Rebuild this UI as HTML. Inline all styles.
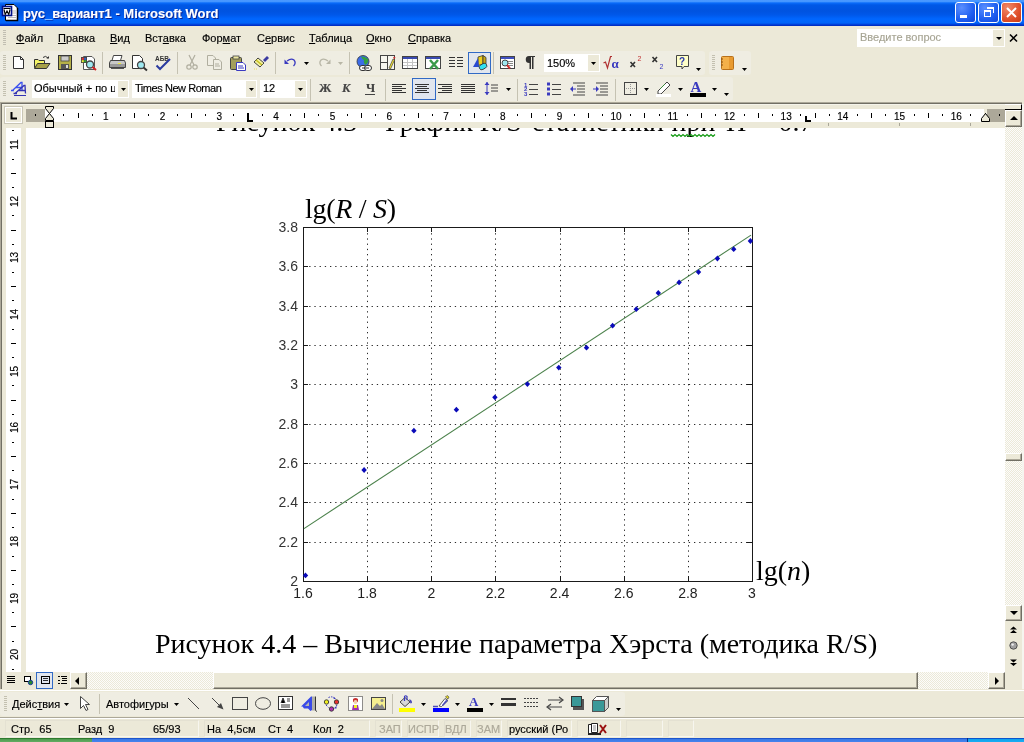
<!DOCTYPE html>
<html><head><meta charset="utf-8">
<style>
*{margin:0;padding:0;box-sizing:border-box}
html,body{width:1024px;height:742px;overflow:hidden}
body{position:relative;background:#ECE9D8;font-family:"Liberation Sans",sans-serif;font-size:11px;color:#000}
.a{position:absolute}
svg{position:absolute;overflow:visible}
#title{left:0;top:0;width:1024px;height:26px;background:linear-gradient(#4A98FF 0px,#4596FF 1.5px,#0A6CFA 3px,#0058E6 5px,#0053E0 11px,#0058EA 15px,#0066FF 19px,#0064F8 23px,#0034D0 25px,#002AB8 26px)}
#title .t{left:23px;top:6px;color:#fff;font-weight:bold;font-size:13px;white-space:nowrap;text-shadow:1px 1px 0 #0A1E8C}
.wb{top:2px;width:21px;height:21px;border:1px solid #fff;border-radius:3px;background:radial-gradient(circle at 30% 25%,#5A8FFF,#1F5FF0 60%,#1046D8)}
.menu{top:32px;white-space:nowrap;line-height:13px}
.menu u{text-decoration:underline;text-underline-offset:1px}
.tb{background:#EFEDE2;border-radius:3px}
.grip{width:3px;background:repeating-linear-gradient(#C1BEB1 0,#C1BEB1 1px,transparent 1px,transparent 2px)}
.sep{width:1px;background:#C5C2B2;border-right:1px solid #fff;width:2px}
.combo{background:#fff;border:1px solid #fff}
.dd{width:0;height:0;border-left:3px solid transparent;border-right:3px solid transparent;border-top:3px solid #000}
.doc{left:26px;top:128px;width:979px;height:544px;background:#fff;overflow:hidden}
.inner{position:absolute;left:-26px;top:-128px;width:1024px;height:742px}
.serif{font-family:"Liberation Serif",serif;font-size:28px;white-space:nowrap;line-height:32px}
.yl{position:absolute;left:258px;width:40px;text-align:right;font-size:14px;line-height:16px;color:#333}
.xl{position:absolute;top:585px;width:40px;text-align:center;font-size:14px;line-height:16px;color:#222}
.chk{background-color:#F5F3EB;background-image:repeating-conic-gradient(#ECE9D8 0 25%,#FCFCFB 0 50%);background-size:2px 2px}
.btn{background:#ECE9D8;border-top:1px solid #fff;border-left:1px solid #fff;border-right:1px solid #716F64;border-bottom:1px solid #716F64;box-shadow:inset -1px -1px 0 #ACA899}
.rn{position:absolute;top:109px;font-size:10px;line-height:12px;width:20px;text-align:center}
.st{top:722px;white-space:nowrap}
#wrap div{-webkit-text-stroke:0.15px currentColor}
#wrap .doc div{-webkit-text-stroke:0}
#wrap{position:absolute;left:0;top:0;width:1024px;height:742px;overflow:hidden;will-change:transform;background:#ECE9D8}
</style></head><body><div id="wrap">

<!-- Title bar -->
<div id="title" class="a">
  <svg class="a" style="left:0px;top:3px" width="20" height="19"><path d="M5.5 1.5H14L17.5 5V17.5H5.5Z" fill="#fff" stroke="#000"/><path d="M6 17.5H17.5V5" fill="none" stroke="#000" stroke-width="1.5"/><path d="M12 8H16M12 10H16M8 12.5H16M8 14.5H16" stroke="#bbb"/><rect x="2.5" y="3.5" width="9" height="9" fill="#fff" stroke="#00108C" stroke-width="1.6"/><path d="M3.5 5.5H10.5" stroke="#000"/><path d="M4 6.5L5.2 11.5L7 8L8.8 11.5L10 6.5" fill="none" stroke="#000" stroke-width="1.1"/></svg>
  <div class="a t">рус_вариант1 - Microsoft Word</div>
  <div class="a wb" style="left:955px"><div class="a" style="left:4px;top:12px;width:7px;height:3px;background:#fff"></div></div>
  <div class="a wb" style="left:978px"><div class="a" style="left:5px;top:7px;width:7px;height:7px;border:1px solid #fff;border-top-width:2px"></div><div class="a" style="left:8px;top:4px;width:7px;height:6px;border:1px solid #fff;border-top-width:2px;border-left:none;border-bottom:none"></div></div>
  <div class="a wb" style="left:1001px;background:radial-gradient(circle at 30% 25%,#F08A6A,#E0502A 60%,#C63A16)">
    <svg width="21" height="21" style="left:-1px;top:-1px"><path d="M6 6L15 15M15 6L6 15" stroke="#fff" stroke-width="2"/></svg>
  </div>
</div>

<!-- Menu bar -->
<div class="a grip" style="left:3px;top:30px;height:15px"></div>
<div class="a menu" style="left:16px"><u>Ф</u>айл</div>
<div class="a menu" style="left:58px"><u>П</u>равка</div>
<div class="a menu" style="left:110px"><u>В</u>ид</div>
<div class="a menu" style="left:145px">Вст<u>а</u>вка</div>
<div class="a menu" style="left:202px">Фор<u>м</u>ат</div>
<div class="a menu" style="left:257px">С<u>е</u>рвис</div>
<div class="a menu" style="left:309px"><u>Т</u>аблица</div>
<div class="a menu" style="left:366px"><u>О</u>кно</div>
<div class="a menu" style="left:408px"><u>С</u>правка</div>
<div class="a" style="left:857px;top:29px;width:148px;height:18px;background:#fff"></div>
<div class="a" style="left:993px;top:30px;width:11px;height:16px;background:#ECE9D8"></div>
<div class="a dd" style="left:996px;top:37px"></div>
<div class="a" style="left:860px;top:31px;color:#A7A594;white-space:nowrap">Введите вопрос</div>
<svg class="a" style="left:1009px;top:34px" width="10" height="8"><path d="M1 0.5L8 7.5M8 0.5L1 7.5" stroke="#000" stroke-width="1.6"/></svg>

<!-- Standard toolbar -->
<div class="a tb" style="left:0;top:51px;width:705px;height:24px"></div>
<div class="a tb" style="left:709px;top:51px;width:42px;height:24px"></div>
<!-- Formatting toolbar -->
<div class="a tb" style="left:0;top:77px;width:733px;height:24px"></div>
<svg class="a" style="left:3px;top:55px" width="4" height="16" viewBox="0 0 4 16"><rect x="0" y="0" width="3" height="1" fill="#C3C0B0"/><rect x="0" y="2" width="3" height="1" fill="#C3C0B0"/><rect x="0" y="4" width="3" height="1" fill="#C3C0B0"/><rect x="0" y="6" width="3" height="1" fill="#C3C0B0"/><rect x="0" y="8" width="3" height="1" fill="#C3C0B0"/><rect x="0" y="10" width="3" height="1" fill="#C3C0B0"/><rect x="0" y="12" width="3" height="1" fill="#C3C0B0"/><rect x="0" y="14" width="3" height="1" fill="#C3C0B0"/></svg>
<svg class="a" style="left:13px;top:55px" width="12" height="15" viewBox="0 0 12 15"><path d="M0.5 1.5H7.5L10.5 4.5V13.5H0.5Z" fill="#fff" stroke="#333"/><path d="M7.5 1.5V4.5H10.5" fill="none" stroke="#333"/></svg>
<svg class="a" style="left:34px;top:55px" width="17" height="15" viewBox="0 0 17 15"><path d="M0.5 4.5H4L5 5.5H10.5V12.5H0.5Z" fill="#F4F466" stroke="#333"/><path d="M0.5 13.5L3.5 8.5H16L12.5 13.5Z" fill="#A6A048" stroke="#333"/><path d="M9 2.5Q11.5 0 14 3" fill="none" stroke="#333"/><path d="M12.5 3.5H15V1Z" fill="#333"/></svg>
<svg class="a" style="left:58px;top:55px" width="15" height="16" viewBox="0 0 15 16"><rect x="0.5" y="0.5" width="13" height="14" fill="#B5B048" stroke="#333"/><rect x="3" y="1" width="8" height="5" fill="#ccc" stroke="#444" stroke-width="0.8"/><rect x="3" y="9" width="8" height="5" fill="#555"/><rect x="8" y="10" width="2" height="3" fill="#ddd"/></svg>
<svg class="a" style="left:81px;top:55px" width="16" height="16" viewBox="0 0 16 16"><path d="M2.5 1.5H11L13.5 4V14.5H2.5Z" fill="#fff" stroke="#555"/><rect x="0" y="2" width="6" height="6" fill="#444"/><rect x="0.8" y="2.8" width="2" height="2" fill="#e33"/><rect x="3.2" y="2.8" width="2" height="2" fill="#36c"/><rect x="0.8" y="5.2" width="2" height="2" fill="#ee3"/><rect x="3.2" y="5.2" width="2" height="2" fill="#3a3"/><circle cx="9" cy="9.5" r="3.5" fill="#9EE8F0" stroke="#444" stroke-width="1.3"/><path d="M11.5 12L15 15" stroke="#D02020" stroke-width="2"/></svg>
<div class="a" style="left:102px;top:52px;width:1px;height:22px;background:#C5C2B2"></div>
<svg class="a" style="left:109px;top:55px" width="17" height="15" viewBox="0 0 17 15"><path d="M4.5 0.5H13L11.5 5.5H3Z" fill="#fff" stroke="#444"/><path d="M1.5 5.5H15.5L16.5 8V12.5H0.5V8Z" fill="#C8C8C8" stroke="#444"/><rect x="1" y="9" width="15" height="3" fill="#9a9a9a"/><rect x="9" y="8" width="3" height="1" fill="#ee3"/><rect x="2" y="13" width="13" height="1" fill="#555"/></svg>
<svg class="a" style="left:132px;top:55px" width="17" height="16" viewBox="0 0 17 16"><path d="M0.5 0.5H7.5L10.5 3.5V13.5H0.5Z" fill="#fff" stroke="#333"/><circle cx="9" cy="10" r="3.5" fill="#9EE8F0" stroke="#444" stroke-width="1.3"/><path d="M11.5 12.5L15 15.5" stroke="#333" stroke-width="2"/></svg>
<svg class="a" style="left:155px;top:55px" width="16" height="16" viewBox="0 0 16 16"><text x="0" y="6" font-size="6.5" font-family="Liberation Sans" font-weight="bold" fill="#333">АБВ</text><path d="M1.5 10.5L5 14L15 4" fill="none" stroke="#2A3AA0" stroke-width="2"/></svg>
<div class="a" style="left:177px;top:52px;width:1px;height:22px;background:#C5C2B2"></div>
<svg class="a" style="left:186px;top:55px" width="12" height="15" viewBox="0 0 12 15"><path d="M3 0L8 10M9 0L4 10" stroke="#B0AE9F" stroke-width="1.2"/><circle cx="3" cy="12" r="2.2" fill="none" stroke="#B0AE9F" stroke-width="1.2"/><circle cx="9" cy="12" r="2.2" fill="none" stroke="#B0AE9F" stroke-width="1.2"/></svg>
<svg class="a" style="left:207px;top:55px" width="16" height="15" viewBox="0 0 16 15"><path d="M0.5 0.5H6L8.5 3V10.5H0.5Z" fill="#F0EEE4" stroke="#B0AE9F"/><path d="M6.5 4.5H12L14.5 7V14.5H6.5Z" fill="#F0EEE4" stroke="#B0AE9F"/><path d="M8 9H12M8 11H13" stroke="#B0AE9F"/></svg>
<svg class="a" style="left:230px;top:55px" width="17" height="16" viewBox="0 0 17 16"><rect x="0.5" y="2.5" width="11" height="12" rx="1" fill="#A39F5B" stroke="#444"/><rect x="3" y="1" width="6" height="3" fill="#EBE7A0" stroke="#444" stroke-width="0.8"/><path d="M6.5 7.5H13L15.5 10V15.5H6.5Z" fill="#fff" stroke="#3A3AC0"/><path d="M8 11H13M8 13H14" stroke="#3A3AC0"/></svg>
<svg class="a" style="left:253px;top:55px" width="17" height="16" viewBox="0 0 17 16"><path d="M1 7L7 12L11 8L5 3Z" fill="#F2F0A0" stroke="#444"/><path d="M3 5L9 10" stroke="#C8C020" stroke-width="1.5"/><path d="M10 5L14 1L16 3L12 7Z" fill="#3A3AA0"/><path d="M1 14H5" stroke="#EEE055" stroke-dasharray="1 1"/></svg>
<div class="a" style="left:275px;top:52px;width:1px;height:22px;background:#C5C2B2"></div>
<svg class="a" style="left:284px;top:55px" width="13" height="15" viewBox="0 0 13 15"><path d="M3 6Q7 3 10 5Q12.5 8 9.5 11" fill="none" stroke="#3A3ABF" stroke-width="1.3"/><path d="M0.5 4.5L5 9H0.5Z" fill="#3A3ABF"/></svg>
<svg class="a" style="left:304px;top:62px" width="5" height="3" viewBox="0 0 5 3"><path d="M0 0H5L2.5 3Z" fill="#000"/></svg>
<svg class="a" style="left:318px;top:55px" width="13" height="15" viewBox="0 0 13 15"><path d="M10 6Q6 3 3 5Q0.5 8 3.5 11" fill="none" stroke="#B8B6A6" stroke-width="1.3"/><path d="M12.5 4.5L8 9H12.5Z" fill="#B8B6A6"/></svg>
<svg class="a" style="left:338px;top:62px" width="5" height="3" viewBox="0 0 5 3"><path d="M0 0H5L2.5 3Z" fill="#B8B6A6"/></svg>
<div class="a" style="left:349px;top:52px;width:1px;height:22px;background:#C5C2B2"></div>
<svg class="a" style="left:356px;top:55px" width="17" height="17" viewBox="0 0 17 17"><circle cx="7" cy="6.5" r="6" fill="#3C6CE8" stroke="#333" stroke-width="0.8"/><path d="M5 1.5Q9 1 12 4Q13 8 9 10Q7 7 8 5Q6 4 5 1.5Z" fill="#34A040"/><rect x="3.5" y="10.5" width="7" height="5" rx="2.5" fill="#fff" stroke="#333"/><rect x="8.5" y="10.5" width="7" height="5" rx="2.5" fill="#fff" stroke="#333"/><path d="M6 13H13" stroke="#333"/></svg>
<svg class="a" style="left:380px;top:55px" width="16" height="16" viewBox="0 0 16 16"><rect x="0.5" y="0.5" width="14" height="14" fill="#F6F5EE" stroke="#444"/><path d="M7.5 0.5V14.5M0.5 7.5H7.5" stroke="#444"/><path d="M9 13L13 4L14.5 5L10.5 14Z" fill="#F2E030" stroke="#444" stroke-width="0.7"/><path d="M13 3L14 1.5L15.5 2.5L14.5 4" fill="#D03030"/></svg>
<svg class="a" style="left:402px;top:55px" width="17" height="15" viewBox="0 0 17 15"><rect x="0.5" y="1.5" width="15" height="12" fill="#fff" stroke="#444"/><rect x="1" y="2" width="14" height="2" fill="#3A4AB0"/><path d="M1 7.5H15M1 10.5H15M5.5 4V13M10.5 4V13" stroke="#C4C4C4"/></svg>
<svg class="a" style="left:425px;top:55px" width="17" height="16" viewBox="0 0 17 16"><rect x="0.5" y="1.5" width="15" height="12" fill="#fff" stroke="#444"/><rect x="1" y="2" width="14" height="2" fill="#3A4AB0"/><path d="M5 5L13 14M13 5L5 14" stroke="#3A9A4A" stroke-width="2.5"/></svg>
<svg class="a" style="left:449px;top:55px" width="14" height="14" viewBox="0 0 14 14"><path d="M0 2.5H6M8 2.5H14M0 5.5H6M8 5.5H14M0 8.5H6M8 8.5H14M0 11.5H6M8 11.5H14" stroke="#333" stroke-width="1"/></svg>
<div class="a" style="left:468px;top:52px;width:23px;height:22px;background:#E1E6EE;border:1px solid #316AC5"></div>
<svg class="a" style="left:472px;top:55px" width="17" height="16" viewBox="0 0 17 16"><path d="M6 2L11 0.5V9L6 10.5Z" fill="#EED020" stroke="#333" stroke-width="0.8"/><path d="M11 0.5L14 2.5V11L11 9Z" fill="#C8A818" stroke="#333" stroke-width="0.8"/><path d="M1 12L6 3L7 12Z" fill="#2A4AD0"/><rect x="7" y="9" width="8" height="5" rx="2.5" fill="#30E0F0" stroke="#333" stroke-width="0.8" transform="rotate(-30 11 11.5)"/></svg>
<div class="a" style="left:493px;top:52px;width:1px;height:22px;background:#C5C2B2"></div>
<svg class="a" style="left:500px;top:55px" width="16" height="16" viewBox="0 0 16 16"><rect x="0.5" y="1.5" width="14" height="12" fill="#fff" stroke="#444"/><rect x="1" y="2" width="13" height="2" fill="#4050C0"/><path d="M8 6.5H13M8 8.5H13M8 10.5H13" stroke="#888"/><circle cx="5" cy="8" r="3" fill="#9EE8F0" stroke="#444"/><path d="M7 10L10 13.5" stroke="#D03030" stroke-width="2"/></svg>
<svg class="a" style="left:524px;top:55px" width="12" height="15" viewBox="0 0 12 15"><path d="M5 1H11V2H9.5V14H8V2H7V14H5.5V8A3.5 3.5 0 0 1 5 1Z" fill="#333"/></svg>
<div class="a" style="left:544px;top:54px;width:56px;height:18px;background:#fff"></div>
<div class="a" style="left:588px;top:55px;width:11px;height:16px;background:#ECE9D8"></div>
<svg class="a" style="left:591px;top:62px" width="5" height="3" viewBox="0 0 5 3"><path d="M0 0H5L2.5 3Z" fill="#000"/></svg>
<div class="a" style="left:547px;top:57px;white-space:nowrap;font-size:11px;line-height:12px">150%</div>
<svg class="a" style="left:603px;top:55px" width="18" height="15" viewBox="0 0 18 15"><path d="M0.5 8L2.5 7L4.5 13L7.5 1.5H9" fill="none" stroke="#B03030" stroke-width="1.2"/><text x="8.5" y="12.5" font-size="13" font-family="Liberation Serif" fill="#3A3ABF" font-weight="bold">α</text></svg>
<svg class="a" style="left:630px;top:55px" width="13" height="15" viewBox="0 0 13 15"><path d="M0.5 7L5 12M5 7L0.5 12" stroke="#333" stroke-width="1.6"/><text x="7.5" y="5.5" font-size="7" font-family="Liberation Sans" fill="#C03030">2</text></svg>
<svg class="a" style="left:652px;top:55px" width="13" height="15" viewBox="0 0 13 15"><path d="M0.5 2L5 7M5 2L0.5 7" stroke="#333" stroke-width="1.6"/><text x="7.5" y="13.5" font-size="7" font-family="Liberation Sans" fill="#3A3AC0">2</text></svg>
<svg class="a" style="left:675px;top:55px" width="15" height="16" viewBox="0 0 15 16"><path d="M1.5 0.5H13.5V11.5H9L7 14V11.5H1.5Z" fill="#FFFFC8" stroke="#444"/><text x="4" y="10" font-size="10" font-weight="bold" font-family="Liberation Sans" fill="#2A3AB0">?</text></svg>
<svg class="a" style="left:696px;top:68px" width="5" height="3" viewBox="0 0 5 3"><path d="M0 0H5L2.5 3Z" fill="#000"/></svg>
<svg class="a" style="left:712px;top:55px" width="4" height="16" viewBox="0 0 4 16"><rect x="0" y="0" width="3" height="1" fill="#C3C0B0"/><rect x="0" y="2" width="3" height="1" fill="#C3C0B0"/><rect x="0" y="4" width="3" height="1" fill="#C3C0B0"/><rect x="0" y="6" width="3" height="1" fill="#C3C0B0"/><rect x="0" y="8" width="3" height="1" fill="#C3C0B0"/><rect x="0" y="10" width="3" height="1" fill="#C3C0B0"/><rect x="0" y="12" width="3" height="1" fill="#C3C0B0"/><rect x="0" y="14" width="3" height="1" fill="#C3C0B0"/></svg>
<svg class="a" style="left:720px;top:55px" width="15" height="16" viewBox="0 0 15 16"><rect x="1.5" y="1.5" width="12" height="13" rx="1" fill="#F3B04A" stroke="#B8701A"/><path d="M1 4H3M1 7H3M1 10H3" stroke="#8A5010"/><rect x="9" y="2" width="4" height="12" fill="#E89A30"/></svg>
<svg class="a" style="left:742px;top:68px" width="5" height="3" viewBox="0 0 5 3"><path d="M0 0H5L2.5 3Z" fill="#000"/></svg>
<svg class="a" style="left:3px;top:81px" width="4" height="16" viewBox="0 0 4 16"><rect x="0" y="0" width="3" height="1" fill="#C3C0B0"/><rect x="0" y="2" width="3" height="1" fill="#C3C0B0"/><rect x="0" y="4" width="3" height="1" fill="#C3C0B0"/><rect x="0" y="6" width="3" height="1" fill="#C3C0B0"/><rect x="0" y="8" width="3" height="1" fill="#C3C0B0"/><rect x="0" y="10" width="3" height="1" fill="#C3C0B0"/><rect x="0" y="12" width="3" height="1" fill="#C3C0B0"/><rect x="0" y="14" width="3" height="1" fill="#C3C0B0"/></svg>
<svg class="a" style="left:10px;top:81px" width="18" height="17" viewBox="0 0 18 17"><path d="M1 9.5H4M2.5 9.5L11 1.5H12L12 9.5M6 6.5H11.5" fill="none" stroke="#3A50F0" stroke-width="1.3"/><path d="M3.5 12.5H7M5 12.5L14 4.5H15L15.5 12.5M9 9.5H15" fill="none" stroke="#3434B4" stroke-width="1.3"/><rect x="4" y="14" width="12" height="1" fill="#3434B4"/></svg>
<div class="a" style="left:32px;top:80px;width:97px;height:18px;background:#fff"></div>
<div class="a" style="left:118px;top:81px;width:10px;height:16px;background:#ECE9D8"></div>
<svg class="a" style="left:121px;top:88px" width="5" height="3" viewBox="0 0 5 3"><path d="M0 0H5L2.5 3Z" fill="#000"/></svg>
<div class="a" style="left:34px;top:82px;width:81px;overflow:hidden;white-space:nowrap;font-size:11px;line-height:13px">Обычный + по ц</div>
<div class="a" style="left:132px;top:80px;width:125px;height:18px;background:#fff"></div>
<div class="a" style="left:246px;top:81px;width:10px;height:16px;background:#ECE9D8"></div>
<svg class="a" style="left:249px;top:88px" width="5" height="3" viewBox="0 0 5 3"><path d="M0 0H5L2.5 3Z" fill="#000"/></svg>
<div class="a" style="left:135px;top:82px;white-space:nowrap;font-size:11px;line-height:13px;letter-spacing:-0.45px">Times New Roman</div>
<div class="a" style="left:260px;top:80px;width:47px;height:18px;background:#fff"></div>
<div class="a" style="left:295px;top:81px;width:11px;height:16px;background:#ECE9D8"></div>
<svg class="a" style="left:298px;top:88px" width="5" height="3" viewBox="0 0 5 3"><path d="M0 0H5L2.5 3Z" fill="#000"/></svg>
<div class="a" style="left:263px;top:82px;white-space:nowrap;font-size:11px;line-height:13px">12</div>
<div class="a" style="left:310px;top:79px;width:1px;height:22px;background:#C5C2B2"></div>
<div class="a" style="left:319px;top:81px;white-space:nowrap;font-family:Liberation Serif;font-weight:bold;font-size:12.5px;color:#444;line-height:14px">Ж</div>
<div class="a" style="left:342px;top:81px;white-space:nowrap;font-family:Liberation Serif;font-weight:bold;font-style:italic;font-size:12.5px;color:#444;line-height:14px">К</div>
<div class="a" style="left:366px;top:81px;white-space:nowrap;font-family:Liberation Serif;font-weight:bold;font-size:12.5px;color:#444;line-height:14px">Ч</div>
<div class="a" style="left:365px;top:94px;width:10px;height:1px;background:#444"></div>
<div class="a" style="left:385px;top:79px;width:1px;height:22px;background:#C5C2B2"></div>
<svg class="a" style="left:392px;top:81px" width="16" height="16" viewBox="0 0 16 16"><rect x="0" y="3" width="14" height="1" fill="#333"/><rect x="0" y="5" width="10" height="1" fill="#333"/><rect x="0" y="7" width="14" height="1" fill="#333"/><rect x="0" y="9" width="10" height="1" fill="#333"/><rect x="0" y="11" width="14" height="1" fill="#333"/></svg>
<div class="a" style="left:412px;top:78px;width:24px;height:22px;background:#E1E6EE;border:1px solid #316AC5"></div>
<svg class="a" style="left:415px;top:81px" width="16" height="16" viewBox="0 0 16 16"><rect x="0" y="3" width="14" height="1" fill="#333"/><rect x="2" y="5" width="10" height="1" fill="#333"/><rect x="0" y="7" width="14" height="1" fill="#333"/><rect x="2" y="9" width="10" height="1" fill="#333"/><rect x="0" y="11" width="14" height="1" fill="#333"/></svg>
<svg class="a" style="left:438px;top:81px" width="16" height="16" viewBox="0 0 16 16"><rect x="0" y="3" width="14" height="1" fill="#333"/><rect x="4" y="5" width="10" height="1" fill="#333"/><rect x="0" y="7" width="14" height="1" fill="#333"/><rect x="4" y="9" width="10" height="1" fill="#333"/><rect x="0" y="11" width="14" height="1" fill="#333"/></svg>
<svg class="a" style="left:461px;top:81px" width="16" height="16" viewBox="0 0 16 16"><rect x="0" y="3" width="14" height="1" fill="#333"/><rect x="0" y="5" width="14" height="1" fill="#333"/><rect x="0" y="7" width="14" height="1" fill="#333"/><rect x="0" y="9" width="14" height="1" fill="#333"/><rect x="0" y="11" width="14" height="1" fill="#333"/></svg>
<svg class="a" style="left:484px;top:81px" width="16" height="16" viewBox="0 0 16 16"><path d="M3 1V14" stroke="#3A3ABF"/><path d="M0.5 4L3 1L5.5 4ZM0.5 11L3 14L5.5 11Z" fill="#3A3ABF"/><path d="M7 4H14M7 7H14M7 10H14" stroke="#444"/></svg>
<svg class="a" style="left:506px;top:88px" width="5" height="3" viewBox="0 0 5 3"><path d="M0 0H5L2.5 3Z" fill="#000"/></svg>
<div class="a" style="left:517px;top:79px;width:1px;height:22px;background:#C5C2B2"></div>
<svg class="a" style="left:524px;top:81px" width="16" height="16" viewBox="0 0 16 16"><text x="0" y="5.5" font-size="6" font-weight="bold" font-family="Liberation Sans" fill="#3A3ABF">1</text><text x="0" y="10" font-size="6" font-weight="bold" font-family="Liberation Sans" fill="#3A3ABF">2</text><text x="0" y="14.5" font-size="6" font-weight="bold" font-family="Liberation Sans" fill="#3A3ABF">3</text><path d="M5 3.5H14M5 8.5H14M5 13.5H14" stroke="#444"/></svg>
<svg class="a" style="left:547px;top:81px" width="16" height="16" viewBox="0 0 16 16"><rect x="0" y="1.5" width="3" height="3" fill="#3A3ABF"/><rect x="0" y="6.5" width="3" height="3" fill="#3A3ABF"/><rect x="0" y="11.5" width="3" height="3" fill="#3A3ABF"/><path d="M5 3.5H14M5 8.5H14M5 13.5H14" stroke="#444"/></svg>
<svg class="a" style="left:570px;top:81px" width="17" height="16" viewBox="0 0 17 16"><path d="M3 2H15M7 5H15M7 8H15M7 11H15M3 14H15" stroke="#444"/><path d="M0 8L3 5V11Z" fill="#3A3ABF"/><path d="M3 8H6" stroke="#3A3ABF"/></svg>
<svg class="a" style="left:593px;top:81px" width="17" height="16" viewBox="0 0 17 16"><path d="M3 2H15M7 5H15M7 8H15M7 11H15M3 14H15" stroke="#444"/><path d="M6 8L3 5V11Z" fill="#3A3ABF"/><path d="M0 8H3" stroke="#3A3ABF"/></svg>
<div class="a" style="left:615px;top:79px;width:1px;height:22px;background:#C5C2B2"></div>
<svg class="a" style="left:624px;top:81px" width="14" height="16" viewBox="0 0 14 16"><rect x="0.5" y="1.5" width="12" height="12" fill="none" stroke="#444"/><path d="M6.5 3V12M2 7.5H11" stroke="#999" stroke-dasharray="1 1"/></svg>
<svg class="a" style="left:644px;top:88px" width="5" height="3" viewBox="0 0 5 3"><path d="M0 0H5L2.5 3Z" fill="#000"/></svg>
<svg class="a" style="left:656px;top:81px" width="17" height="16" viewBox="0 0 17 16"><path d="M2 10L11 1L14 4L5 13H2Z" fill="#fff" stroke="#444"/><path d="M4 8L9 3" stroke="#3A8A3A"/><rect x="0" y="13" width="15" height="3" fill="#fff"/></svg>
<svg class="a" style="left:678px;top:88px" width="5" height="3" viewBox="0 0 5 3"><path d="M0 0H5L2.5 3Z" fill="#000"/></svg>
<svg class="a" style="left:690px;top:81px" width="17" height="17" viewBox="0 0 17 17"><text x="0.5" y="11" font-size="15" font-weight="bold" font-family="Liberation Serif" fill="#3A3ABF">A</text><rect x="0" y="12" width="16" height="4" fill="#000"/></svg>
<svg class="a" style="left:712px;top:88px" width="5" height="3" viewBox="0 0 5 3"><path d="M0 0H5L2.5 3Z" fill="#000"/></svg>
<svg class="a" style="left:724px;top:93px" width="5" height="3" viewBox="0 0 5 3"><path d="M0 0H5L2.5 3Z" fill="#000"/></svg>

<!-- Ruler frame -->
<div class="a" style="left:0;top:102px;width:1022px;height:1px;background:#ACA899"></div><div class="a" style="left:0;top:103px;width:1022px;height:1px;background:#716F64"></div><div class="a" style="left:2px;top:104px;width:1020px;height:1px;background:#F5F4EA"></div>

<!-- tab selector -->
<div class="a" style="left:5px;top:107px;width:17px;height:16px;background:#ECE9D8;border:1px solid #fff;outline:1px solid #C9C6B6"></div>
<svg class="a" style="left:0;top:0" width="30" height="130"><path d="M11.5 112V118.5H17" stroke="#000" stroke-width="2" fill="none"/></svg>
<!-- horizontal ruler -->
<div class="a" style="left:26px;top:109px;width:19px;height:13px;background:#ACA899"></div>
<div class="a" style="left:45px;top:109px;width:939px;height:13px;background:#fff"></div>
<div class="a" style="left:987px;top:109px;width:18px;height:13px;background:#ACA899"></div>
<div class="a" style="left:95.89px;top:109.5px;width:20px;text-align:center;font-size:10px;line-height:13px">1</div>
<div class="a" style="left:152.58px;top:109.5px;width:20px;text-align:center;font-size:10px;line-height:13px">2</div>
<div class="a" style="left:209.27px;top:109.5px;width:20px;text-align:center;font-size:10px;line-height:13px">3</div>
<div class="a" style="left:265.96px;top:109.5px;width:20px;text-align:center;font-size:10px;line-height:13px">4</div>
<div class="a" style="left:322.65px;top:109.5px;width:20px;text-align:center;font-size:10px;line-height:13px">5</div>
<div class="a" style="left:379.34px;top:109.5px;width:20px;text-align:center;font-size:10px;line-height:13px">6</div>
<div class="a" style="left:436.03px;top:109.5px;width:20px;text-align:center;font-size:10px;line-height:13px">7</div>
<div class="a" style="left:492.72px;top:109.5px;width:20px;text-align:center;font-size:10px;line-height:13px">8</div>
<div class="a" style="left:549.41px;top:109.5px;width:20px;text-align:center;font-size:10px;line-height:13px">9</div>
<div class="a" style="left:606.10px;top:109.5px;width:20px;text-align:center;font-size:10px;line-height:13px">10</div>
<div class="a" style="left:662.79px;top:109.5px;width:20px;text-align:center;font-size:10px;line-height:13px">11</div>
<div class="a" style="left:719.48px;top:109.5px;width:20px;text-align:center;font-size:10px;line-height:13px">12</div>
<div class="a" style="left:776.17px;top:109.5px;width:20px;text-align:center;font-size:10px;line-height:13px">13</div>
<div class="a" style="left:832.86px;top:109.5px;width:20px;text-align:center;font-size:10px;line-height:13px">14</div>
<div class="a" style="left:889.55px;top:109.5px;width:20px;text-align:center;font-size:10px;line-height:13px">15</div>
<div class="a" style="left:946.24px;top:109.5px;width:20px;text-align:center;font-size:10px;line-height:13px">16</div>
<svg class="a" style="left:0px;top:0px" width="1024" height="130" viewBox="0 0 1024 130"><rect x="35" y="114" width="1" height="2" fill="#000"/><rect x="63" y="114" width="1" height="2" fill="#000"/><rect x="78" y="113" width="1" height="5" fill="#000"/><rect x="92" y="114" width="1" height="2" fill="#000"/><rect x="120" y="114" width="1" height="2" fill="#000"/><rect x="134" y="113" width="1" height="5" fill="#000"/><rect x="148" y="114" width="1" height="2" fill="#000"/><rect x="177" y="114" width="1" height="2" fill="#000"/><rect x="191" y="113" width="1" height="5" fill="#000"/><rect x="205" y="114" width="1" height="2" fill="#000"/><rect x="233" y="114" width="1" height="2" fill="#000"/><rect x="248" y="113" width="1" height="5" fill="#000"/><rect x="262" y="114" width="1" height="2" fill="#000"/><rect x="290" y="114" width="1" height="2" fill="#000"/><rect x="304" y="113" width="1" height="5" fill="#000"/><rect x="318" y="114" width="1" height="2" fill="#000"/><rect x="347" y="114" width="1" height="2" fill="#000"/><rect x="361" y="113" width="1" height="5" fill="#000"/><rect x="375" y="114" width="1" height="2" fill="#000"/><rect x="404" y="114" width="1" height="2" fill="#000"/><rect x="418" y="113" width="1" height="5" fill="#000"/><rect x="432" y="114" width="1" height="2" fill="#000"/><rect x="460" y="114" width="1" height="2" fill="#000"/><rect x="474" y="113" width="1" height="5" fill="#000"/><rect x="489" y="114" width="1" height="2" fill="#000"/><rect x="517" y="114" width="1" height="2" fill="#000"/><rect x="531" y="113" width="1" height="5" fill="#000"/><rect x="545" y="114" width="1" height="2" fill="#000"/><rect x="574" y="114" width="1" height="2" fill="#000"/><rect x="588" y="113" width="1" height="5" fill="#000"/><rect x="602" y="114" width="1" height="2" fill="#000"/><rect x="630" y="114" width="1" height="2" fill="#000"/><rect x="644" y="113" width="1" height="5" fill="#000"/><rect x="659" y="114" width="1" height="2" fill="#000"/><rect x="687" y="114" width="1" height="2" fill="#000"/><rect x="701" y="113" width="1" height="5" fill="#000"/><rect x="715" y="114" width="1" height="2" fill="#000"/><rect x="744" y="114" width="1" height="2" fill="#000"/><rect x="758" y="113" width="1" height="5" fill="#000"/><rect x="772" y="114" width="1" height="2" fill="#000"/><rect x="800" y="114" width="1" height="2" fill="#000"/><rect x="815" y="113" width="1" height="5" fill="#000"/><rect x="829" y="114" width="1" height="2" fill="#000"/><rect x="857" y="114" width="1" height="2" fill="#000"/><rect x="871" y="113" width="1" height="5" fill="#000"/><rect x="885" y="114" width="1" height="2" fill="#000"/><rect x="914" y="114" width="1" height="2" fill="#000"/><rect x="928" y="113" width="1" height="5" fill="#000"/><rect x="942" y="114" width="1" height="2" fill="#000"/><rect x="970" y="114" width="1" height="2" fill="#000"/><rect x="985" y="113" width="1" height="5" fill="#000"/><rect x="999" y="114" width="1" height="2" fill="#000"/></svg>
<svg class="a" style="left:44px;top:105px" width="11" height="24" viewBox="0 0 11 24"><path d="M1.5 1.5H9.5V3.5L5.5 8.5L9.5 13.5V15.5H1.5V13.5L5.5 8.5L1.5 3.5Z" fill="#ECE9D8" stroke="#000"/><rect x="1.5" y="16.5" width="8" height="6" fill="#ECE9D8" stroke="#000"/></svg>
<svg class="a" style="left:980px;top:112px" width="11" height="11" viewBox="0 0 11 11"><path d="M1.5 9.5V6.5L5.5 1.5L9.5 6.5V9.5Z" fill="#ECE9D8" stroke="#000"/></svg>
<svg class="a" style="left:0px;top:0px" width="1024" height="130" viewBox="0 0 1024 130"><rect x="247" y="113" width="1" height="9" fill="#000"/><rect x="248" y="116" width="1" height="6" fill="#000"/><rect x="247" y="120" width="6" height="2" fill="#000"/><rect x="805" y="116" width="2" height="6" fill="#000"/><rect x="805" y="120" width="6" height="2" fill="#000"/><rect x="828" y="123" width="1" height="3" fill="#A8A698"/><rect x="899" y="123" width="1" height="3" fill="#A8A698"/><rect x="970" y="123" width="1" height="3" fill="#A8A698"/></svg>

<!-- Document -->
<div class="a doc"><div class="inner">
  <div class="a serif" style="left:216px;top:106px">Рисунок 4.3 – График R/S <span style="margin-left:3px">статистики</span> <span style="margin-left:0.5px">при</span> <span style="margin-left:3.5px">H</span> = <span style="margin-left:2.5px">0.7</span></div>
  <svg class="a" style="left:671px;top:133px" width="45" height="5"><path d="M0 1.5L2 3.5L4 1.5L6 3.5L8 1.5L10 3.5L12 1.5L14 3.5L16 1.5L18 3.5L20 1.5L22 3.5L24 1.5L26 3.5L28 1.5L30 3.5L32 1.5L34 3.5L36 1.5L38 3.5L40 1.5L42 3.5L44 1.5" fill="none" stroke="#129A12" stroke-width="1.2"/></svg>
  <svg class="a" style="left:0;top:0" width="1024" height="742">
<line x1="367.5" y1="228" x2="367.5" y2="581" stroke="#2a2a2a" stroke-width="1" stroke-dasharray="1.3 3.9"/>
<line x1="431.5" y1="228" x2="431.5" y2="581" stroke="#2a2a2a" stroke-width="1" stroke-dasharray="1.3 3.9"/>
<line x1="495.5" y1="228" x2="495.5" y2="581" stroke="#2a2a2a" stroke-width="1" stroke-dasharray="1.3 3.9"/>
<line x1="560.5" y1="228" x2="560.5" y2="581" stroke="#2a2a2a" stroke-width="1" stroke-dasharray="1.3 3.9"/>
<line x1="624.5" y1="228" x2="624.5" y2="581" stroke="#2a2a2a" stroke-width="1" stroke-dasharray="1.3 3.9"/>
<line x1="688.5" y1="228" x2="688.5" y2="581" stroke="#2a2a2a" stroke-width="1" stroke-dasharray="1.3 3.9"/>
<line x1="304" y1="542.5" x2="752" y2="542.5" stroke="#2a2a2a" stroke-width="1" stroke-dasharray="1.3 3.9"/>
<line x1="304" y1="502.5" x2="752" y2="502.5" stroke="#2a2a2a" stroke-width="1" stroke-dasharray="1.3 3.9"/>
<line x1="304" y1="463.5" x2="752" y2="463.5" stroke="#2a2a2a" stroke-width="1" stroke-dasharray="1.3 3.9"/>
<line x1="304" y1="424.5" x2="752" y2="424.5" stroke="#2a2a2a" stroke-width="1" stroke-dasharray="1.3 3.9"/>
<line x1="304" y1="384.5" x2="752" y2="384.5" stroke="#2a2a2a" stroke-width="1" stroke-dasharray="1.3 3.9"/>
<line x1="304" y1="345.5" x2="752" y2="345.5" stroke="#2a2a2a" stroke-width="1" stroke-dasharray="1.3 3.9"/>
<line x1="304" y1="306.5" x2="752" y2="306.5" stroke="#2a2a2a" stroke-width="1" stroke-dasharray="1.3 3.9"/>
<line x1="304" y1="266.5" x2="752" y2="266.5" stroke="#2a2a2a" stroke-width="1" stroke-dasharray="1.3 3.9"/>
<line x1="367.5" y1="227" x2="367.5" y2="232" stroke="#1a1a1a"/>
<line x1="367.5" y1="581" x2="367.5" y2="576" stroke="#1a1a1a"/>
<line x1="431.5" y1="227" x2="431.5" y2="232" stroke="#1a1a1a"/>
<line x1="431.5" y1="581" x2="431.5" y2="576" stroke="#1a1a1a"/>
<line x1="495.5" y1="227" x2="495.5" y2="232" stroke="#1a1a1a"/>
<line x1="495.5" y1="581" x2="495.5" y2="576" stroke="#1a1a1a"/>
<line x1="560.5" y1="227" x2="560.5" y2="232" stroke="#1a1a1a"/>
<line x1="560.5" y1="581" x2="560.5" y2="576" stroke="#1a1a1a"/>
<line x1="624.5" y1="227" x2="624.5" y2="232" stroke="#1a1a1a"/>
<line x1="624.5" y1="581" x2="624.5" y2="576" stroke="#1a1a1a"/>
<line x1="688.5" y1="227" x2="688.5" y2="232" stroke="#1a1a1a"/>
<line x1="688.5" y1="581" x2="688.5" y2="576" stroke="#1a1a1a"/>
<line x1="303" y1="542.5" x2="308" y2="542.5" stroke="#1a1a1a"/>
<line x1="752" y1="542.5" x2="747" y2="542.5" stroke="#1a1a1a"/>
<line x1="303" y1="502.5" x2="308" y2="502.5" stroke="#1a1a1a"/>
<line x1="752" y1="502.5" x2="747" y2="502.5" stroke="#1a1a1a"/>
<line x1="303" y1="463.5" x2="308" y2="463.5" stroke="#1a1a1a"/>
<line x1="752" y1="463.5" x2="747" y2="463.5" stroke="#1a1a1a"/>
<line x1="303" y1="424.5" x2="308" y2="424.5" stroke="#1a1a1a"/>
<line x1="752" y1="424.5" x2="747" y2="424.5" stroke="#1a1a1a"/>
<line x1="303" y1="384.5" x2="308" y2="384.5" stroke="#1a1a1a"/>
<line x1="752" y1="384.5" x2="747" y2="384.5" stroke="#1a1a1a"/>
<line x1="303" y1="345.5" x2="308" y2="345.5" stroke="#1a1a1a"/>
<line x1="752" y1="345.5" x2="747" y2="345.5" stroke="#1a1a1a"/>
<line x1="303" y1="306.5" x2="308" y2="306.5" stroke="#1a1a1a"/>
<line x1="752" y1="306.5" x2="747" y2="306.5" stroke="#1a1a1a"/>
<line x1="303" y1="266.5" x2="308" y2="266.5" stroke="#1a1a1a"/>
<line x1="752" y1="266.5" x2="747" y2="266.5" stroke="#1a1a1a"/>
<rect x="303.5" y="227.5" width="449" height="354" fill="none" stroke="#1a1a1a" stroke-width="1"/>
<line x1="304" y1="528.6" x2="751" y2="235.1" stroke="#4a804a" stroke-width="1.1"/>
<path d="M302.8 575.4L305.5 572.5L308.2 575.4L305.5 578.3Z" fill="#0a0ab8"/>
<path d="M361.40000000000003 470.0L364.1 467.1L366.8 470.0L364.1 472.9Z" fill="#0a0ab8"/>
<path d="M411.2 430.7L413.9 427.8L416.59999999999997 430.7L413.9 433.59999999999997Z" fill="#0a0ab8"/>
<path d="M453.7 409.7L456.4 406.8L459.09999999999997 409.7L456.4 412.59999999999997Z" fill="#0a0ab8"/>
<path d="M492.2 397.3L494.9 394.40000000000003L497.59999999999997 397.3L494.9 400.2Z" fill="#0a0ab8"/>
<path d="M524.6999999999999 384.1L527.4 381.20000000000005L530.1 384.1L527.4 387.0Z" fill="#0a0ab8"/>
<path d="M556.0999999999999 367.6L558.8 364.70000000000005L561.5 367.6L558.8 370.5Z" fill="#0a0ab8"/>
<path d="M583.8 347.7L586.5 344.8L589.2 347.7L586.5 350.59999999999997Z" fill="#0a0ab8"/>
<path d="M609.9 325.7L612.6 322.8L615.3000000000001 325.7L612.6 328.59999999999997Z" fill="#0a0ab8"/>
<path d="M633.5999999999999 309.2L636.3 306.3L639.0 309.2L636.3 312.09999999999997Z" fill="#0a0ab8"/>
<path d="M655.5999999999999 292.9L658.3 290.0L661.0 292.9L658.3 295.79999999999995Z" fill="#0a0ab8"/>
<path d="M676.4 282.4L679.1 279.5L681.8000000000001 282.4L679.1 285.29999999999995Z" fill="#0a0ab8"/>
<path d="M695.8 272.1L698.5 269.20000000000005L701.2 272.1L698.5 275.0Z" fill="#0a0ab8"/>
<path d="M714.6999999999999 258.5L717.4 255.6L720.1 258.5L717.4 261.4Z" fill="#0a0ab8"/>
<path d="M731.0 249.2L733.7 246.29999999999998L736.4000000000001 249.2L733.7 252.1Z" fill="#0a0ab8"/>
<path d="M747.6999999999999 241.0L750.4 238.1L753.1 241.0L750.4 243.9Z" fill="#0a0ab8"/>
  </svg>
<div class="yl" style="top:573.0px">2</div>
<div class="yl" style="top:533.7px">2.2</div>
<div class="yl" style="top:494.3px">2.4</div>
<div class="yl" style="top:455.0px">2.6</div>
<div class="yl" style="top:415.7px">2.8</div>
<div class="yl" style="top:376.3px">3</div>
<div class="yl" style="top:337.0px">3.2</div>
<div class="yl" style="top:297.7px">3.4</div>
<div class="yl" style="top:258.3px">3.6</div>
<div class="yl" style="top:219.0px">3.8</div>
<div class="xl" style="left:283.0px">1.6</div>
<div class="xl" style="left:347.1px">1.8</div>
<div class="xl" style="left:411.3px">2</div>
<div class="xl" style="left:475.4px">2.2</div>
<div class="xl" style="left:539.6px">2.4</div>
<div class="xl" style="left:603.7px">2.6</div>
<div class="xl" style="left:667.9px">2.8</div>
<div class="xl" style="left:732.0px">3</div>
  <div class="a serif" style="left:305px;top:193px;letter-spacing:-0.3px">lg(<i>R</i> / <i>S</i>)</div>
  <div class="a serif" style="left:756px;top:555px">lg(<i>n</i>)</div>
  <div class="a serif" style="left:155px;top:628px">Рисунок 4.4 – Вычисление параметра Хэрста (методика R/S)</div>
</div></div>

<!-- vertical ruler -->
<div class="a" style="left:6px;top:128px;width:15px;height:544px;background:#fff"></div>
<div class="a" style="left:4px;top:138.00px;width:21px;height:13px;text-align:center;font-size:10px;line-height:13px;transform:rotate(-90deg)">11</div>
<div class="a" style="left:4px;top:194.69px;width:21px;height:13px;text-align:center;font-size:10px;line-height:13px;transform:rotate(-90deg)">12</div>
<div class="a" style="left:4px;top:251.38px;width:21px;height:13px;text-align:center;font-size:10px;line-height:13px;transform:rotate(-90deg)">13</div>
<div class="a" style="left:4px;top:308.07px;width:21px;height:13px;text-align:center;font-size:10px;line-height:13px;transform:rotate(-90deg)">14</div>
<div class="a" style="left:4px;top:364.76px;width:21px;height:13px;text-align:center;font-size:10px;line-height:13px;transform:rotate(-90deg)">15</div>
<div class="a" style="left:4px;top:421.45px;width:21px;height:13px;text-align:center;font-size:10px;line-height:13px;transform:rotate(-90deg)">16</div>
<div class="a" style="left:4px;top:478.14px;width:21px;height:13px;text-align:center;font-size:10px;line-height:13px;transform:rotate(-90deg)">17</div>
<div class="a" style="left:4px;top:534.83px;width:21px;height:13px;text-align:center;font-size:10px;line-height:13px;transform:rotate(-90deg)">18</div>
<div class="a" style="left:4px;top:591.52px;width:21px;height:13px;text-align:center;font-size:10px;line-height:13px;transform:rotate(-90deg)">19</div>
<div class="a" style="left:4px;top:648.21px;width:21px;height:13px;text-align:center;font-size:10px;line-height:13px;transform:rotate(-90deg)">20</div>
<svg class="a" style="left:0px;top:0px" width="30" height="742" viewBox="0 0 30 742"><rect x="12" y="130" width="2" height="1" fill="#000"/><rect x="12" y="159" width="2" height="1" fill="#000"/><rect x="11" y="173" width="5" height="1" fill="#000"/><rect x="12" y="187" width="2" height="1" fill="#000"/><rect x="12" y="215" width="2" height="1" fill="#000"/><rect x="11" y="230" width="5" height="1" fill="#000"/><rect x="12" y="244" width="2" height="1" fill="#000"/><rect x="12" y="272" width="2" height="1" fill="#000"/><rect x="11" y="286" width="5" height="1" fill="#000"/><rect x="12" y="300" width="2" height="1" fill="#000"/><rect x="12" y="329" width="2" height="1" fill="#000"/><rect x="11" y="343" width="5" height="1" fill="#000"/><rect x="12" y="357" width="2" height="1" fill="#000"/><rect x="12" y="385" width="2" height="1" fill="#000"/><rect x="11" y="400" width="5" height="1" fill="#000"/><rect x="12" y="414" width="2" height="1" fill="#000"/><rect x="12" y="442" width="2" height="1" fill="#000"/><rect x="11" y="456" width="5" height="1" fill="#000"/><rect x="12" y="470" width="2" height="1" fill="#000"/><rect x="12" y="499" width="2" height="1" fill="#000"/><rect x="11" y="513" width="5" height="1" fill="#000"/><rect x="12" y="527" width="2" height="1" fill="#000"/><rect x="12" y="556" width="2" height="1" fill="#000"/><rect x="11" y="570" width="5" height="1" fill="#000"/><rect x="12" y="584" width="2" height="1" fill="#000"/><rect x="12" y="612" width="2" height="1" fill="#000"/><rect x="11" y="626" width="5" height="1" fill="#000"/><rect x="12" y="641" width="2" height="1" fill="#000"/><rect x="12" y="669" width="2" height="1" fill="#000"/></svg>
<div class="a" style="left:0px;top:102px;width:1px;height:587px;background:#ACA899"></div>
<div class="a" style="left:1px;top:103px;width:1px;height:586px;background:#716F64"></div>

<!-- vertical scrollbar -->
<div class="a chk" style="left:1005px;top:127px;width:17px;height:478px"></div>
<div class="a btn" style="left:1005px;top:110px;width:17px;height:17px"></div>
<div class="a" style="left:1010px;top:116px;width:0;height:0;border-left:4px solid transparent;border-right:4px solid transparent;border-bottom:4px solid #000"></div>
<div class="a btn" style="left:1005px;top:453px;width:17px;height:8px"></div>
<div class="a btn" style="left:1005px;top:605px;width:17px;height:16px"></div>
<div class="a" style="left:1010px;top:611px;width:0;height:0;border-left:4px solid transparent;border-right:4px solid transparent;border-top:4px solid #000"></div>
<div class="a" style="left:1005px;top:104px;width:17px;height:6px;background:#ECE9D8;border-top:1px solid #fff;border-right:1px solid #000;border-bottom:1px solid #000"></div>

<div class="a" style="left:1022px;top:104px;width:2px;height:585px;background:#F6F5EF"></div>
<!-- horizontal scrollbar -->
<div class="a chk" style="left:87px;top:672px;width:918px;height:17px"></div>
<div class="a btn" style="left:70px;top:672px;width:17px;height:17px"></div>
<div class="a" style="left:75px;top:677px;width:0;height:0;border-top:4px solid transparent;border-bottom:4px solid transparent;border-right:4px solid #000"></div>
<div class="a btn" style="left:213px;top:672px;width:705px;height:17px"></div>
<div class="a btn" style="left:988px;top:672px;width:17px;height:17px"></div>
<div class="a" style="left:995px;top:677px;width:0;height:0;border-top:4px solid transparent;border-bottom:4px solid transparent;border-left:4px solid #000"></div>
<svg class="a" style="left:7px;top:676px" width="9" height="9" viewBox="0 0 9 9"><path d="M0 0.5H8M0 2.5H8M0 4.5H8M0 6.5H8" stroke="#000"/></svg>
<svg class="a" style="left:24px;top:676px" width="10" height="10" viewBox="0 0 10 10"><rect x="0.5" y="0.5" width="6" height="5" fill="#fff" stroke="#000"/><circle cx="6.5" cy="6.5" r="2.2" fill="#2A8A2A" stroke="#1A3AA0"/></svg>
<div class="a" style="left:36px;top:672px;width:17px;height:17px;background:#E1E6EE;border:1px solid #316AC5"></div>
<svg class="a" style="left:41px;top:676px" width="9" height="8" viewBox="0 0 9 8"><rect x="0.5" y="0.5" width="8" height="7" fill="none" stroke="#000"/><path d="M2 2.5H7M2 4.5H7" stroke="#000" stroke-width="0.8"/></svg>
<svg class="a" style="left:58px;top:676px" width="9" height="9" viewBox="0 0 9 9"><path d="M0 0.5H2M3 0.5H9M0 4.5H2M4 4.5H9M0 7.5H2M3 7.5H9M4 2.5H9" stroke="#000"/></svg>
<svg class="a" style="left:1009px;top:626px" width="9" height="8" viewBox="0 0 9 8"><path d="M1 3.5L4.5 0.5L8 3.5ZM1 7L4.5 4L8 7Z" fill="#000"/></svg>
<svg class="a" style="left:1009px;top:641px" width="9" height="9" viewBox="0 0 9 9"><circle cx="4.5" cy="4.5" r="3.7" fill="#A0A0A0" stroke="#505050"/><circle cx="3.6" cy="3.6" r="1.2" fill="#eee"/></svg>
<svg class="a" style="left:1009px;top:659px" width="9" height="8" viewBox="0 0 9 8"><path d="M1 0.5L4.5 3.5L8 0.5ZM1 4L4.5 7L8 4Z" fill="#000"/></svg>

<!-- Drawing toolbar -->
<div class="a" style="left:0;top:690px;width:1024px;height:1px;background:#fff"></div>
<div class="a tb" style="left:0;top:692px;width:625px;height:24px"></div>
<svg class="a" style="left:4px;top:696px" width="4" height="16" viewBox="0 0 4 16"><rect x="0" y="0" width="3" height="1" fill="#C3C0B0"/><rect x="0" y="2" width="3" height="1" fill="#C3C0B0"/><rect x="0" y="4" width="3" height="1" fill="#C3C0B0"/><rect x="0" y="6" width="3" height="1" fill="#C3C0B0"/><rect x="0" y="8" width="3" height="1" fill="#C3C0B0"/><rect x="0" y="10" width="3" height="1" fill="#C3C0B0"/><rect x="0" y="12" width="3" height="1" fill="#C3C0B0"/><rect x="0" y="14" width="3" height="1" fill="#C3C0B0"/></svg>
<div class="a" style="left:12px;top:698px;white-space:nowrap">Дейс<u style="text-decoration:underline">т</u>вия</div>
<svg class="a" style="left:64px;top:703px" width="5" height="3" viewBox="0 0 5 3"><path d="M0 0H5L2.5 3Z" fill="#000"/></svg>
<svg class="a" style="left:80px;top:696px" width="11" height="15" viewBox="0 0 11 15"><path d="M0.5 0.5V12.5L3.5 9.5L6 14.5L8 13.5L5.5 8.5H9.5Z" fill="#fff" stroke="#444"/></svg>
<div class="a" style="left:99px;top:694px;width:1px;height:20px;background:#C5C2B2"></div>
<div class="a" style="left:106px;top:698px;white-space:nowrap">Автофи<u style="text-decoration:underline">г</u>уры</div>
<svg class="a" style="left:174px;top:703px" width="5" height="3" viewBox="0 0 5 3"><path d="M0 0H5L2.5 3Z" fill="#000"/></svg>
<svg class="a" style="left:187px;top:697px" width="14" height="14" viewBox="0 0 14 14"><path d="M1 1L12 12" stroke="#444"/></svg>
<svg class="a" style="left:211px;top:697px" width="14" height="14" viewBox="0 0 14 14"><path d="M1 1L9 9" stroke="#444"/><path d="M12.5 12.5L6 10L10 6Z" fill="#444"/></svg>
<svg class="a" style="left:232px;top:697px" width="17" height="14" viewBox="0 0 17 14"><rect x="0.5" y="0.5" width="15" height="12" fill="none" stroke="#444"/></svg>
<svg class="a" style="left:255px;top:697px" width="17" height="14" viewBox="0 0 17 14"><ellipse cx="8" cy="6.5" rx="7.5" ry="5.8" fill="none" stroke="#444"/></svg>
<svg class="a" style="left:278px;top:696px" width="16" height="15" viewBox="0 0 16 15"><rect x="0.5" y="0.5" width="14" height="13" fill="#fff" stroke="#333"/><path d="M3 7L5 2L7 7M9 3H12M9 5H12M3 9H12M3 11H12" stroke="#333"/></svg>
<svg class="a" style="left:301px;top:696px" width="17" height="16" viewBox="0 0 17 16"><path d="M0 10.5L10 0.5H11V14L9.5 15L7 12.5H3L1.5 10.5Z" fill="#3A4AE8"/><path d="M4 10L8 6V10Z" fill="#B8B8B0"/><rect x="11" y="0.5" width="3" height="14" fill="#B0B0A8"/><path d="M14.5 0.5V14.5L16 15.5" fill="none" stroke="#333"/></svg>
<svg class="a" style="left:324px;top:696px" width="16" height="16" viewBox="0 0 16 16"><circle cx="2.5" cy="6" r="2.2" fill="#F0F020" stroke="#333" stroke-width="0.9"/><circle cx="12.5" cy="6" r="2.2" fill="#E83030" stroke="#333" stroke-width="0.9"/><circle cx="7.5" cy="13" r="2.2" fill="#B030B0" stroke="#333" stroke-width="0.9"/><path d="M4.5 1.5Q8 0 10.5 2" fill="none" stroke="#3A3ABF" stroke-dasharray="1.5 1"/><path d="M10 1L12 3L9.5 3Z" fill="#3A3ABF"/><path d="M13 9L11 12M2 9L4.5 11.5" fill="none" stroke="#3A3ABF" stroke-dasharray="1.5 1"/><path d="M10 12.5L12.5 12.5L12.5 10Z" fill="#3A3ABF"/></svg>
<svg class="a" style="left:348px;top:696px" width="16" height="16" viewBox="0 0 16 16"><rect x="0.5" y="0.5" width="14" height="14" fill="#fff" stroke="#222" stroke-dasharray="1 1"/><path d="M5 3Q7.5 1 10 3V6H5Z" fill="#C83030"/><circle cx="7.5" cy="6" r="2" fill="#F0D0B0"/><path d="M4 14L5 9H10L11 14Z" fill="#A030B0"/><rect x="6" y="9" width="3" height="3" fill="#F0F020"/></svg>
<svg class="a" style="left:371px;top:696px" width="16" height="16" viewBox="0 0 16 16"><rect x="0.5" y="1.5" width="14" height="12" fill="#F6F090" stroke="#444"/><path d="M1 13L6 7L9 10L11 8L14 13Z" fill="#888"/><circle cx="11" cy="4.5" r="1.5" fill="#888"/></svg>
<div class="a" style="left:392px;top:694px;width:1px;height:20px;background:#C5C2B2"></div>
<svg class="a" style="left:399px;top:695px" width="17" height="18" viewBox="0 0 17 18"><path d="M1 7L6 2.5L11 7L6 11.5Z" fill="#D8D8D8" stroke="#333" stroke-width="0.9"/><path d="M5.5 6V1.5Q6.5 0 8 1.5V5" fill="none" stroke="#3A3ABF" stroke-width="1.2"/><path d="M10 4.5Q13 4 13 8L11.5 8.5Z" fill="#4A4AB8"/><rect x="0" y="13" width="16" height="4" fill="#FFFF00"/></svg>
<svg class="a" style="left:421px;top:703px" width="5" height="3" viewBox="0 0 5 3"><path d="M0 0H5L2.5 3Z" fill="#000"/></svg>
<svg class="a" style="left:433px;top:695px" width="17" height="18" viewBox="0 0 17 18"><path d="M6 11L12 3.5L15 5.5L8.5 11.5Z" fill="#fff" stroke="#333" stroke-width="0.8"/><path d="M9 10L13 5L15 5.5L10 11Z" fill="#4A4AB8"/><path d="M12.5 2L14 0.5L16 2L15 4Z" fill="#F0E020" stroke="#333" stroke-width="0.6"/><path d="M0 11.5H5" stroke="#4A4AB8" stroke-width="1.5"/><rect x="0" y="13" width="16" height="4" fill="#0000FF"/></svg>
<svg class="a" style="left:455px;top:703px" width="5" height="3" viewBox="0 0 5 3"><path d="M0 0H5L2.5 3Z" fill="#000"/></svg>
<svg class="a" style="left:467px;top:695px" width="17" height="18" viewBox="0 0 17 18"><text x="2" y="11" font-size="13" font-weight="bold" font-family="Liberation Serif" fill="#3A3ABF">A</text><rect x="0" y="13" width="16" height="4" fill="#000"/></svg>
<svg class="a" style="left:489px;top:703px" width="5" height="3" viewBox="0 0 5 3"><path d="M0 0H5L2.5 3Z" fill="#000"/></svg>
<svg class="a" style="left:501px;top:697px" width="16" height="14" viewBox="0 0 16 14"><rect x="0" y="1" width="15" height="2" fill="#333"/><rect x="0" y="6" width="15" height="3" fill="#333"/></svg>
<svg class="a" style="left:524px;top:697px" width="16" height="14" viewBox="0 0 16 14"><path d="M0 1.5H15M0 5.5H15M0 9.5H15" stroke="#444" stroke-dasharray="2 1"/></svg>
<svg class="a" style="left:547px;top:696px" width="17" height="16" viewBox="0 0 17 16"><path d="M1 4H15M1 11H15" stroke="#444" stroke-width="1.2"/><path d="M12 1L16 4L12 7M4 8L0 11L4 14" fill="none" stroke="#444" stroke-width="1.2"/></svg>
<svg class="a" style="left:571px;top:696px" width="14" height="15" viewBox="0 0 14 15"><rect x="2" y="3" width="11" height="11" fill="#555"/><rect x="0.5" y="0.5" width="10" height="10" fill="#3A9898" stroke="#333"/></svg>
<svg class="a" style="left:592px;top:696px" width="18" height="16" viewBox="0 0 18 16"><path d="M0.5 4.5L4.5 0.5H16.5L12.5 4.5Z" fill="#fff" stroke="#555"/><path d="M12.5 4.5L16.5 0.5V11.5L12.5 15.5Z" fill="#ccc" stroke="#555"/><rect x="0.5" y="4.5" width="12" height="11" fill="#3A9898" stroke="#555"/></svg>
<svg class="a" style="left:616px;top:708px" width="5" height="3" viewBox="0 0 5 3"><path d="M0 0H5L2.5 3Z" fill="#000"/></svg>

<!-- Status bar -->
<div class="a" style="left:0;top:717px;width:1024px;height:1px;background:#ACA899"></div>
<div class="a" style="left:0;top:718px;width:1024px;height:1px;background:#fff"></div>
<div class="a" style="left:0px;top:719px;width:1024px;height:19px;background:#ECE9D8"></div>
<div class="a" style="left:5px;top:720px;width:194px;height:17px;border:1px solid;border-color:#E4E1D2 #F7F6EF #F7F6EF #E4E1D2"></div>
<div class="a" style="left:204px;top:720px;width:166px;height:17px;border:1px solid;border-color:#E4E1D2 #F7F6EF #F7F6EF #E4E1D2"></div>
<div class="a" style="left:375px;top:720px;width:27px;height:17px;border:1px solid;border-color:#E4E1D2 #F7F6EF #F7F6EF #E4E1D2"></div>
<div class="a" style="left:407px;top:720px;width:32px;height:17px;border:1px solid;border-color:#E4E1D2 #F7F6EF #F7F6EF #E4E1D2"></div>
<div class="a" style="left:444px;top:720px;width:27px;height:17px;border:1px solid;border-color:#E4E1D2 #F7F6EF #F7F6EF #E4E1D2"></div>
<div class="a" style="left:476px;top:720px;width:26px;height:17px;border:1px solid;border-color:#E4E1D2 #F7F6EF #F7F6EF #E4E1D2"></div>
<div class="a" style="left:507px;top:720px;width:65px;height:17px;border:1px solid;border-color:#E4E1D2 #F7F6EF #F7F6EF #E4E1D2"></div>
<div class="a" style="left:577px;top:720px;width:44px;height:17px;border:1px solid;border-color:#E4E1D2 #F7F6EF #F7F6EF #E4E1D2"></div>
<div class="a" style="left:626px;top:720px;width:37px;height:17px;border:1px solid;border-color:#E4E1D2 #F7F6EF #F7F6EF #E4E1D2"></div>
<div class="a" style="left:668px;top:720px;width:26px;height:17px;border:1px solid;border-color:#E4E1D2 #F7F6EF #F7F6EF #E4E1D2"></div>
<div class="a" style="left:11px;top:723px;white-space:nowrap;">Стр.&nbsp; 65</div>
<div class="a" style="left:78px;top:723px;white-space:nowrap;">Разд&nbsp; 9</div>
<div class="a" style="left:153px;top:723px;white-space:nowrap;">65/93</div>
<div class="a" style="left:207px;top:723px;white-space:nowrap;">На&nbsp; 4,5см</div>
<div class="a" style="left:268px;top:723px;white-space:nowrap;">Ст&nbsp; 4</div>
<div class="a" style="left:313px;top:723px;white-space:nowrap;">Кол&nbsp; 2</div>
<div class="a" style="left:379px;top:723px;white-space:nowrap;color:#ACA899">ЗАП</div>
<div class="a" style="left:408px;top:723px;white-space:nowrap;color:#ACA899">ИСПР</div>
<div class="a" style="left:445px;top:723px;white-space:nowrap;color:#ACA899">ВДЛ</div>
<div class="a" style="left:477px;top:723px;white-space:nowrap;color:#ACA899">ЗАМ</div>
<div class="a" style="left:509px;top:723px;white-space:nowrap;">русский (Ро</div>
<svg class="a" style="left:587px;top:721px" width="22" height="15" viewBox="0 0 22 15"><path d="M1.5 3.5H7.5V12.5H1.5Z" fill="#fff" stroke="#222"/><path d="M4.5 2.5H10.5V11.5H4.5Z" fill="#fff" stroke="#222"/><path d="M6 5H9M6 7H9M6 9H9" stroke="#666" stroke-width="0.7"/><rect x="1" y="12" width="13" height="2" fill="#222"/><path d="M13 4L19 12M19 4L13 12" stroke="#9A1010" stroke-width="2"/></svg>

<!-- taskbar -->
<div class="a" style="left:0;top:738px;width:1024px;height:4px;background:linear-gradient(#1D55CC 0,#1D55CC 1px,#3A78E4 1px,#4584EE 4px)"></div>
<div class="a" style="left:0;top:738px;width:92px;height:4px;background:linear-gradient(#2E7A2E 0,#2E7A2E 1px,#4E9A4E 1px,#62AC62 4px);clip-path:polygon(0 0,100% 0,calc(100% + 2px) 100%,0 100%)"></div>
<div class="a" style="left:967px;top:738px;width:57px;height:4px;background:linear-gradient(#0A55CC 0,#0A55CC 1px,#10A0EC 1px,#18AEF2 4px);border-left:1px solid #0A2A80"></div>
</div></body></html>
